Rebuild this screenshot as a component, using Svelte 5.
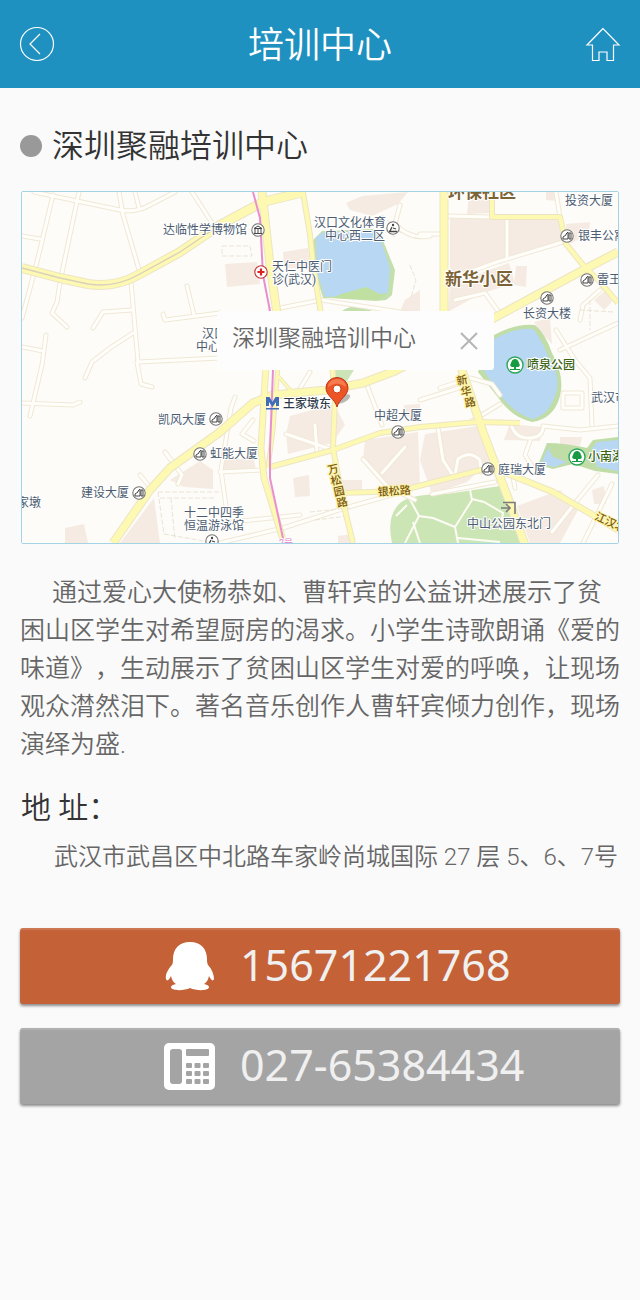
<script>
  const blocks = [
    '450,217 558,217 562,241 507,259 450,280',
    '450,284 509,263 515,283 480,294 448,312',
    '516,266 527,266 526,287 514,285',
    '469,193 489,193 489,213 467,214',
    '558,242 567,236 566,224 590,222 589,233 572,243',
    '546,192 558,192 558,201 546,200',
    '346,203 362,196 408,192 398,204 372,216 350,210',
    '283,252 308,248 310,268 284,268',
    '225,264 257,262 260,284 227,287',
    '405,300 420,290 420,311 400,311',
    '594,300 606,290 612,302 604,310',
    '534,322 550,318 552,344 540,332',
    '290,416 334,404 345,425 332,443 288,454 286,434',
    '293,478 309,475 310,496 295,497',
    '365,440 418,432 420,485 388,487 363,459',
    '425,434 478,426 490,460 467,482 432,494 420,460',
    '510,424 542,427 540,441 504,440',
    '560,437 582,437 580,446 560,444',
    '517,506 560,490 578,510 560,543 530,543',
    '592,490 604,486 606,504 594,504',
    '170,480 200,461 213,470 213,489 184,487',
    '120,543 154,498 160,543',
    '65,528 84,524 88,543 65,543',
    '220,458 254,460 256,470 222,470',
    '340,480 362,480 362,490 340,490',
    '338,536 352,534 354,543 338,543',
    '404,405 420,404 420,418 404,416'
  ];

  const lanes = [
    'M34 192 L120 210 Q136 213 150 205 L175 192',
    'M53 195 L37 262 L22 318',
    'M79 192 L60 282 L57 302 L52 313 L67 327',
    'M22 236 L40 239',
    'M119 192 L123 215 L140 273',
    'M135 192 L139 208',
    'M192 192 L214 226',
    'M131 282 L138 362 L220 358',
    'M132 310 L103 312 L93 328',
    'M133 333 L110 348 L92 362 L85 378',
    'M187 286 L194 315',
    'M163 314 L165 320 L220 313',
    'M46 335 L42 365 L30 416',
    'M22 347 L43 351',
    'M22 403 L73 405 L80 402',
    'M137 362 L141 384 L152 387',
    'M165 452 L182 475 L178 484',
    'M140 475 L149 486',
    'M270 310 L321 300 L420 315',
    'M400 205 L395 224 Q410 240 430 236',
    'M220 472 L262 470',
    'M235 397 L231 408 L221 470 L228 520',
    'M253 420 L242 434 L254 441',
    'M220 543 L283 528 L345 508 L402 492',
    'M232 522 L300 515',
    'M286 434 L333 450',
    'M315 425 L317 453',
    'M296 395 L310 372',
    'M367 385 L382 425',
    'M363 459 L388 487 L415 500',
    'M405 447 L382 473',
    'M420 234 L442 234',
    'M447 216 L492 217',
    'M507 217 L507 258',
    'M450 279 L497 262 L563 242',
    'M560 217 L556 192',
    'M455 300 L485 293 L498 311',
    'M560 350 L618 323',
    'M556 330 L575 360 L590 378 L592 425',
    'M580 320 L583 305 L600 290',
    'M440 388 L470 378 L492 384 L500 395',
    'M420 400 L462 387',
    'M472 421 L500 404',
    'M438 428 L443 460 L452 474',
    'M432 494 L495 482',
    'M455 475 L458 459 Q470 450 480 460 L481 472',
    'M511 424 Q515 438 528 438 Q542 438 543 428',
    'M530 441 L525 455 L532 466',
    'M563 393 L582 393 L582 408 L563 408 Z',
    'M552 532 L575 503 L598 475',
    'M583 543 L612 484',
    'M512 472 L515 488',
    'M543 426 L580 430 L618 426'
  ];

  const roads = [
    { d: 'M22 268 L60 278 L88 284 Q115 288 138 275 L180 252 L220 225 L263 202 L304 192', w: 9 },
    { d: 'M262 192 L270 265 L277 314', w: 8 },
    { d: 'M266 365 L261 448 L264 478 L284 543', w: 6 },
    { d: 'M278 365 L273 430 L268 468', w: 4 },
    { d: 'M303 192 L310 235 L313 265 L321 314', w: 5 },
    { d: 'M332 365 L335 398 L333 448 L342 498 L353 543', w: 5 },
    { d: 'M113 543 L150 490 L170 468 L220 432 L253 403 L273 395 L327 390 L363 383 L395 371 L494 318 L533 297 L587 268 L618 252', w: 8 },
    { d: 'M278 376 L292 392', w: 3 },
    { d: 'M270 467 L333 450 L380 433 L420 427 L478 422 L520 423', w: 5 },
    { d: 'M342 493 L400 491 L430 483 L485 469', w: 5 },
    { d: 'M444 192 L444 311 L462 370 L483 432 L508 498 L525 545', w: 8 },
    { d: 'M492 192 L492 217 L560 217 L566 244 L583 265 L600 282 L618 303', w: 5 },
    { d: 'M494 468 L553 492 L593 515 L618 530', w: 6 }
  ];

  const dashes = [
    'M158 492 H219 M160 498 H216 M158 492 L164 534 M171 498 L175 540 M164 534 L215 543',
    'M222 246 L250 246 L252 256 L222 256 Z',
    'M375 222 L395 237 M382 215 L402 234 M410 265 L416 280 L411 298',
    'M580 310 L614 312 M590 300 L590 330',
    'M310 512 L350 508 M315 520 L348 516'
  ];

  const labels = [
    { x: 163, y: 234, t: '达临性学博物馆' },
    { x: 314, y: 227, t: '汉口文化体育' },
    { x: 325, y: 240, t: '中心西二区' },
    { x: 272, y: 271, t: '天仁中医门' },
    { x: 272, y: 284, t: '诊(武汉)' },
    { x: 565, y: 205, t: '投资大厦' },
    { x: 578, y: 240, t: '银丰公寓' },
    { x: 597, y: 284, t: '雷王' },
    { x: 523, y: 318, t: '长资大楼' },
    { x: 202, y: 338, t: '汉口' },
    { x: 196, y: 351, t: '中心' },
    { x: 158, y: 424, t: '凯风大厦' },
    { x: 210, y: 458, t: '虹能大厦' },
    { x: 81, y: 497, t: '建设大厦' },
    { x: 17, y: 507, t: '家墩' },
    { x: 184, y: 517, t: '十二中四季' },
    { x: 184, y: 530, t: '恒温游泳馆' },
    { x: 374, y: 420, t: '中超大厦' },
    { x: 591, y: 402, t: '武汉市' },
    { x: 498, y: 474, t: '庭瑞大厦' },
    { x: 467, y: 528, t: '中山公园东北门' }
  ];

  const towers = [
    [567, 236], [587, 280], [547, 298], [216, 419],
    [200, 454], [139, 493], [398, 432], [488, 469]
  ];

  const streets = [
    { t: '万', x: 334, y: 473 }, { t: '松', x: 337, y: 484 },
    { t: '园', x: 340, y: 495 }, { t: '路', x: 343, y: 506 },
    { t: '新', x: 463, y: 384 }, { t: '华', x: 467, y: 395 }, { t: '路', x: 471, y: 406 }
  ];

  let popupOpen = $state(true);
</script>

<div class="page">
  <header>
    <button class="icon" aria-label="返回">
      <svg width="36" height="36" viewBox="0 0 36 36" fill="none" stroke="#fff" stroke-width="1.2">
        <circle cx="18" cy="18" r="16.5" />
        <path d="M21 8 L11 18 L21 28" />
      </svg>
    </button>
    <h1>培训中心</h1>
    <a class="icon" href="#home" aria-label="首页">
      <svg width="36" height="36" viewBox="0 0 36 36" fill="none" stroke="#fff" stroke-width="1.2">
        <path d="M18 2.5 L2 19 H7.5 V34.5 H14 V26 H22 V34.5 H28.5 V19 H34 Z" />
      </svg>
    </a>
  </header>

  <main>
    <h2><span class="dot"></span>深圳聚融培训中心</h2>

    <div class="map">
      <svg viewBox="22 192 596 351" role="img" aria-label="地图">
        <rect x="22" y="192" width="596" height="351" fill="#fdfcf8" />
        {#each blocks as points}
          <polygon {points} fill="#f5ebe2" />
        {/each}

        <path d="M313 240 L322 231 L376 229 L384 243 L395 270 L392 295 L386 300 L376 301 L330 298 L323 298 L316 275 Z" fill="#c4dfae" />
        <path d="M316 237 L324 232 L376 231 L381 240 L390 268 L388 292 L384 295 L372 292 L340 296 L325 297 L317 272 Z" fill="#b7d7f2" />
        <path d="M338 295 L352 291 L366 287 L380 294 L388 293 L378 300 L336 298 Z" fill="#bfe0a0" />
        <path d="M342 311 Q354 302 372 311 Z" fill="#c5e0ae" />
        <path d="M335 365 H357 L347 381 L336 384 Z" fill="#cbe5b8" />

        <path d="M492 336 Q515 323 535 325 Q545 333 552 353 Q565 376 560 396 Q554 419 532 422 Q512 417 500 400 L478 372 Z" fill="#c0dda8" />
        <path d="M494 339 Q516 327 533 329 Q541 338 549 358 Q561 376 556 393 Q549 416 532 419 Q514 413 501 396 L484 371 Z" fill="#b7d7f2" />

        <path d="M538 465 L547 443 Q565 443 587 448 L593 440 L618 437 V474 L595 471 L573 464 L553 469 Z" fill="#c0dda8" />
        <path d="M548 448 L553 457 L567 462 L554 467 L541 464 Z" fill="#b7d7f2" />
        <path d="M592 448 L597 442 L618 440 V471 L597 467 Z" fill="#b7d7f2" />

        <path d="M392 543 Q386 516 400 503 Q410 494 447 494 L500 486 L507 500 L521 543 Z" fill="#cbe5b5" />
        <g fill="none" stroke="#fdfcf4" stroke-width="2">
          <path d="M407 494 L419 516 L433 518 L455 527 L472 500 L470 490" />
          <path d="M472 499 L484 502 L503 513 L500 530" />
          <path d="M455 527 L458 543 M407 505 L396 516 M419 516 L405 543 M413 522 L420 543 M458 538 L500 542" />
        </g>

        <g fill="none" stroke-linejoin="round">
          {#each lanes as d}<path {d} stroke="#f0e8d6" stroke-width="5" stroke-linecap="round" />{/each}
          {#each lanes as d}<path {d} stroke="#fffefa" stroke-width="3" stroke-linecap="round" />{/each}
          {#each dashes as d}<path {d} stroke="#ebe3d6" stroke-width="1" stroke-dasharray="5 2" />{/each}
          {#each roads as r}<path d={r.d} stroke="#ece5c4" stroke-width={r.w + 1} />{/each}
          {#each roads as r}<path d={r.d} stroke="#fdf9b2" stroke-width={r.w - 1} />{/each}
          <path d="M22 268 L60 278 L88 284 Q115 288 138 275 L180 252 L214 229" stroke="#d9d0bd" stroke-width="1.4" />
          <path d="M253 192 L260 218 L263 275 L270 311 L273 370 L270 448 L270 478 L284 543" stroke="#e98fd0" stroke-width="2" />
        </g>

        <g class="label">
          {#each labels as l}<text x={l.x} y={l.y}>{l.t}</text>{/each}
          <text x="283" y="408" class="dark">王家墩东</text>
          <text x="527" y="369" class="park">喷泉公园</text>
          <text x="588" y="461" class="park">小南湖</text>
          <text x="378" y="496" class="street" transform="rotate(-4 378 496)">银松路</text>
          <text x="594" y="519" class="street" transform="rotate(25 594 519)">江汉北路</text>
          {#each streets as s}
            <text x={s.x} y={s.y} class="street" text-anchor="middle" transform={`rotate(-12 ${s.x} ${s.y})`}>{s.t}</text>
          {/each}
          <text x="445" y="285" class="area">新华小区</text>
          <text x="448" y="198" class="area">环保社区</text>
          <text x="279" y="546" class="metro">2号</text>
        </g>

        {#each towers as [x, y]}
          <g transform={`translate(${x} ${y})`}>
            <circle r="6.2" fill="#fff" stroke="#777" stroke-width="1.1" />
            <path d="M-4 3 V1 L-1 -1 V-2 L1 -4 V3 Z M2 3 V-3 H4 V3 Z" fill="#fff" stroke="#444" stroke-width="1" />
          </g>
        {/each}
        {#each [[393, 228], [212, 541]] as [x, y]}
          <g transform={`translate(${x} ${y})`}>
            <circle r="6.2" fill="#fff" stroke="#777" stroke-width="1.1" />
            <circle cx="0" cy="-3" r="1.2" fill="#444" />
            <path d="M-1 -1 L-3 3 M0 0 L3 1 M-4 3.5 H4" fill="none" stroke="#444" stroke-width="1.3" />
          </g>
        {/each}
        <g transform="translate(258 230)">
          <circle r="6.2" fill="#fff" stroke="#777" stroke-width="1.1" />
          <path d="M-4 -1.5 L0 -4 L4 -1.5 Z M-3 -1 V3 M0 -1 V3 M3 -1 V3 M-4 3.5 H4" fill="none" stroke="#444" stroke-width="1" />
        </g>
        <g transform="translate(261 272)">
          <circle r="6.2" fill="#fff" stroke="#b33" stroke-width="1.1" />
          <path d="M-3.5 0 H3.5 M0 -3.5 V3.5" stroke="#d22" stroke-width="2.2" />
        </g>
        {#each [[515, 365], [577, 457]] as [x, y]}
          <g transform={`translate(${x} ${y})`}>
            <circle r="8" fill="#fff" stroke="#2fa65a" stroke-width="1.4" />
            <path d="M-1 5 V2 H-3 Q-6 1 -4 -2 Q-3 -6 0 -6 Q3 -6 4 -2 Q6 1 3 2 H1 V5 Z M-5 4 H5 V5 H-5 Z" fill="#189a43" />
          </g>
        {/each}
        <path d="M503 502.5 H515 V514 M501 508 H510 M506 504 L510 508 L506 512" fill="none" stroke="#7b7b7b" stroke-width="1.6" />
        <path d="M266 397 H269.500 L272.500 402 L275.500 397 H279 V406 H276 V402 L272.500 407 L269 402 V406 H266 Z M266 408 H279 V409.500 H266 Z" fill="#3f6db8" />

        <ellipse cx="343" cy="399" rx="8" ry="3.5" transform="rotate(-28 343 399)" fill="#777" opacity=".5" />
        <path d="M337 407 C335 399 326 396 326 388 A11 10.5 0 0 1 348 388 C348 396 339 399 337 407 Z" fill="#ee5526" stroke="#b8371a" stroke-width="1" />
        <path d="M328 387 A9 8 0 0 1 346 387 Q337 380 328 387 Z" fill="#f98d62" opacity=".7" />
        <circle cx="337" cy="389" r="4" fill="#fff" stroke="#c9421d" stroke-width="1" />
      </svg>

      {#if popupOpen}
        <div class="popup">
          <span>深圳聚融培训中心</span>
          <button aria-label="关闭" onclick={() => (popupOpen = false)}>
            <svg width="18" height="18" viewBox="0 0 18 18" stroke="#b5b5b5" stroke-width="2">
              <path d="M1 1 L17 17 M17 1 L1 17" />
            </svg>
          </button>
        </div>
      {/if}
    </div>

    <p class="intro">通过爱心大使杨恭如、曹轩宾的公益讲述展示了贫困山区学生对希望厨房的渴求。小学生诗歌朗诵《爱的味道》，生动展示了贫困山区学生对爱的呼唤，让现场观众潸然泪下。著名音乐创作人曹轩宾倾力创作，现场演绎为盛.</p>

    <h3>地 址：</h3>
    <p class="address">武汉市武昌区中北路车家岭尚城国际 27 层 5、6、7号</p>

    <div class="contacts">
      <a class="qq" href="tel:15671221768">
        <svg width="52" height="50" viewBox="0 0 52 50" fill="#fff">
          <path d="M26 1 C15 1 9 8 9 18 C9 20 9 22 8 24 C4 28 1 34 2 38 C3 41 5 39 7 35 C8 39 9 41 12 43 C8 44 7 45 7 46 C7 50 20 50 26 47 C32 50 45 50 45 46 C45 45 44 44 40 43 C43 41 44 39 45 35 C47 39 49 41 50 38 C50 34 48 28 44 24 C43 22 43 20 43 18 C43 8 37 1 26 1 Z" />
        </svg>
        <span>15671221768</span>
      </a>
      <a class="phone" href="tel:027-65384434">
        <svg width="52" height="50" viewBox="0 0 52 50">
          <rect x="0" y="2" width="51" height="47" rx="5" fill="#fff" />
          <g fill="#a4a4a4">
            <rect x="6" y="8" width="12" height="35" rx="3" />
            <rect x="22" y="8" width="23" height="7" rx="1" />
            {#each [22, 30.5, 39] as x}
              {#each [22, 30, 38] as y}
                <rect {x} {y} width="6" height="5" rx="1" />
              {/each}
            {/each}
          </g>
        </svg>
        <span>027-65384434</span>
      </a>
    </div>
  </main>
</div>

<style>
  :global(body) {
    margin: 0;
    background: #fafafa;
  }
  .page {
    min-height: 100vh;
    color: #666;
    font-family: Roboto, 'Noto Sans CJK SC', sans-serif;
    font-weight: 350;
  }
  header {
    display: flex;
    align-items: center;
    justify-content: space-between;
    height: 88px;
    padding: 0 19px;
    background: #1f91c0;
    color: #fff;
  }
  h1, h2, h3, p {
    margin: 0;
    font-weight: 350;
  }
  h1 {
    padding-top: 4px;
    font-size: 36px;
    line-height: 52px;
  }
  button {
    padding: 0;
    border: 0;
    background: none;
    cursor: pointer;
  }
  .icon, .icon svg {
    display: block;
  }
  main {
    padding: 34px 20px;
  }
  h2 {
    display: flex;
    align-items: center;
    gap: 10px;
    color: #333;
    font-size: 32px;
    line-height: 48px;
  }
  .dot {
    width: 22px;
    height: 22px;
    border-radius: 50%;
    background: #999;
  }
  .map {
    position: relative;
    margin: 21px 1px 0;
    border: 1px solid #a3d3e4;
    border-radius: 2px;
  }
  .map > svg {
    display: block;
    width: 100%;
  }
  .label text {
    fill: #4b5b70;
    stroke: #fff;
    stroke-width: 2px;
    paint-order: stroke;
    font-size: 12px;
    font-weight: 400;
  }
  .label .dark {
    fill: #2e3a4a;
    font-weight: 500;
  }
  .label .park {
    fill: #3a6413;
    font-weight: 500;
  }
  .label .street {
    fill: #7d5a12;
    stroke: #fcf3a8;
    font-size: 11px;
    font-weight: 500;
  }
  .label .area {
    fill: #7c6335;
    font-size: 17px;
    font-weight: 700;
  }
  .label .metro {
    fill: #e07fc8;
    font-size: 9px;
  }
  .popup {
    position: absolute;
    top: 34%;
    left: 195px;
    display: flex;
    align-items: center;
    justify-content: space-between;
    box-sizing: border-box;
    width: 277px;
    height: 59px;
    padding: 0 16px 0 15px;
    border-radius: 3px;
    background: #fdfdfd;
    font-size: 23px;
    line-height: 32px;
  }
  .popup span {
    padding-bottom: 4px;
  }
  .popup svg {
    display: block;
  }
  .intro {
    margin-top: 30px;
    font-size: 25px;
    line-height: 38px;
    text-indent: 32px;
    text-spacing-trim: space-all;
  }
  h3 {
    margin: 22px 0 0 1px;
    color: #333;
    font-size: 30px;
    line-height: 44px;
  }
  .address {
    margin-top: 8px;
    padding-left: 34px;
    font-size: 24px;
    line-height: 38px;
    white-space: nowrap;
    text-spacing-trim: space-all;
  }
  .contacts {
    display: grid;
    gap: 24px;
    margin-top: 52px;
  }
  .contacts a {
    display: flex;
    align-items: center;
    gap: 24px;
    box-sizing: border-box;
    height: 76px;
    padding-left: 24%;
    border-radius: 3px;
    box-shadow: 0 2px 3px rgba(0, 0, 0, 0.45), inset 0 2px 1px rgba(255, 255, 255, 0.15);
    color: #f0f0f0;
    font: 400 43px/60px 'Noto Sans', sans-serif;
    text-decoration: none;
  }
  .contacts span {
    padding-bottom: 2px;
  }
  .qq {
    background: #c46136;
  }
  .phone {
    background: #a4a4a4;
  }
</style>
